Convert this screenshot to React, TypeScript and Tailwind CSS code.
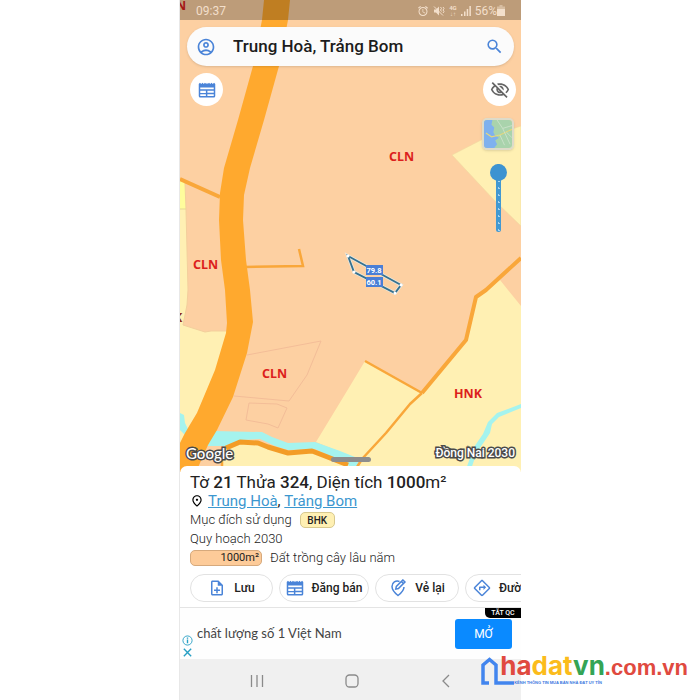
import React from "react";
import { MdAlarm, MdSearch, MdOutlineAccountCircle, MdOutlineVisibilityOff, MdOutlinePlace, MdOutlineNoteAdd, MdOutlineDirections } from "react-icons/md";

const ROBOTO = "font-[Roboto,'Noto_Sans',sans-serif]";

function NewsIcon({ className }: { className?: string }) {
  return (
    <svg viewBox="0 0 24 24" className={className} fill="currentColor" aria-hidden="true">
      <path
        fillRule="evenodd"
        d="M1 4l1.600-1.600L4.300 4 6 2.400 7.700 4l1.600-1.600L11 4l1-1.600L13 4l1.700-1.600L16.300 4 18 2.400 19.700 4l1.700-1.600L23 4v16a2 2 0 0 1-2 2H3a2 2 0 0 1-2-2zM3 8.500v2.500h18V8.500zM3 13v7h7.500v-2.500H3v-1.500h7.500V13zM12.500 13v2.500H21V13zM12.500 17.500V20H21v-2.500z"
      />
    </svg>
  );
}

function RedrawIcon({ className }: { className?: string }) {
  return (
    <svg viewBox="0 0 24 24" className={className} fill="none" stroke="currentColor" strokeWidth="2" aria-hidden="true">
      <path d="M14 3.300C9 1.500 4 4.500 4 10c0 4 3 8 8 12 5-4 8-8 8-11.500" />
      <path d="M9 13.500l.8-3.600L18.500 1.300l2.800 2.800-8.700 8.600z" />
      <path d="M16.500 3.300l2.800 2.800" />
    </svg>
  );
}

function MutedIcon() {
  return (
    <svg viewBox="0 0 24 24" className="size-3" aria-hidden="true">
      <path d="M2 9h4l6-6v18l-6-6H2z" fill="currentColor" />
      <path d="M2 3l18 18M15 4l2 3-2 3 2 3M20 4l2 3-2 3 2 3-2 3" fill="none" stroke="currentColor" strokeWidth="2" />
    </svg>
  );
}

function MapCanvas() {
  return (
    <svg
      viewBox="0 0 341 472"
      preserveAspectRatio="xMidYMid slice"
      className="absolute inset-0 size-full"
      role="img"
      aria-label="Bản đồ quy hoạch"
    >
      <rect width="341" height="472" fill="#fdd0a2" />
      {/* farm land */}
      <g fill="#fff0b3">
        <path d="M0 181L5 183L6 210L8 290L7 305L3 325L25 332L31 331L47 331L36 370L17 413L5 433L0 443Z" />
        <path d="M272 155L305 138L341 126V226L315 201Z" stroke="#f0d9a0" strokeWidth=".6" />
        <path d="M185 361L242 393L286 340L296 297L306 290L320 280L341 306V472H160L172 457L136 442L170 386Z" />
        <path d="M43 472V449L60 442L78 443L108 453L132 451L165 464L180 472Z" />
      </g>
      <path d="M0 181L5 183L6 209H0Z" fill="#fffd9c" />
      {/* water */}
      <g fill="#a5f3ee">
        <path d="M0 413L4 415L5 423L10 433L16 436L8 438L0 430Z" />
        <path d="M34 431L82 432L92 437L108 443L135 442L160 451L180 459L178 472L165 463L135 449L108 450L95 446L80 439L60 440L50 446L27 446Z" />
        <path d="M341 404L317 413L308 422L303 434L294 447L285 472H290L297 452L304 442L310 433L312 424L319 417L341 408Z" />
      </g>
      {/* parcel outlines */}
      <g fill="none" stroke="#f3bd98" strokeWidth="1">
        <path d="M67 355L141 341L127 375L109 401L54 396M69 403L97 404L107 408L98 428L88 424L66 420Z" />
        <path d="M5 183L6 210L8 290L7 305L3 325L25 332L31 331H47" stroke="#f3cf9c" />
        <path d="M0 209H6" stroke="#e5d794" />
      </g>
      {/* roads */}
      <g fill="none" stroke="#f9a73a" strokeLinejoin="round">
        <path d="M0 179L40 197" strokeWidth="4" />
        <path d="M64 267L123 266L119 249" strokeWidth="2.500" strokeLinejoin="miter" />
        <path d="M46 448L60 442L78 443L88 447L108 453L132 451L145 456L168 465" strokeWidth="5" stroke="#f39c27" />
        <path d="M42 448V472" strokeWidth="2.500" />
        <path d="M341 258L306 290L296 297L286 340L242 393" strokeWidth="4" />
        <path d="M185 361L242 393" strokeWidth="2.500" />
        <path d="M242 393L230 404L206 433L182 459L174 472" strokeWidth="2.500" />
      </g>
      <path
        d="M84 0H110L108 20L99 66L84 120L70 168L64 195L63 220L66 260L70 290L73 322L67 353L53 397L37 430L28 445L16 472H0V443L5 433L17 413L35 370L46 333L47 323L45 290L41 260L39 220L40 193L44 168L58 120L73 66L82 20Z"
        fill="#ffa92e"
      />
      {/* land use codes */}
      <g fill="#dc1f1c" fontSize="12.500" fontWeight="700" fontFamily="'Noto Sans', sans-serif">
        <text x="209" y="161">CLN</text>
        <text x="13" y="269">CLN</text>
        <text x="82" y="378">CLN</text>
        <text x="274" y="398">HNK</text>
        <text x="-4" y="10">N</text>
        <text x="-6" y="322" fill="#8e2a1a">K</text>
      </g>
      {/* selected parcel */}
      <path d="M168 256L221 285L215 293L174 272Z" fill="none" stroke="#dff0f5" strokeWidth="3.500" opacity=".7" />
      <path d="M168 256L221 285L215 293L174 272Z" fill="none" stroke="#35718f" strokeWidth="1.800" />
      <g fill="#ffffff">
        <circle cx="168" cy="256" r="1.500" />
        <circle cx="221" cy="285" r="1.500" />
        <circle cx="215" cy="293" r="1.500" />
        <circle cx="174" cy="272" r="1.500" />
      </g>
      <g fill="#4a7fd6">
        <rect x="186" y="265" width="17" height="10" />
        <rect x="186" y="277" width="17" height="10" />
      </g>
      <g fill="#ffffff" fontSize="7.500" fontWeight="700" fontFamily="Roboto, sans-serif" textAnchor="middle">
        <text x="194" y="273">79.8</text>
        <text x="194" y="285">60.1</text>
      </g>
    </svg>
  );
}

function MapStyleThumb() {
  return (
    <svg viewBox="0 0 30 30" className="size-full" aria-hidden="true">
      <rect width="30" height="30" fill="#a9d3ac" />
      <path d="M0 0H9L8 5L11 8L10 13L12 17L16 19L12 22L14 26L11 30H0Z" fill="#7fb1ee" />
      <path d="M2 14L8 18L17 16L30 10" fill="none" stroke="#e6d77c" strokeWidth="1.200" />
      <path d="M17 16L22 27M20 9L28 26M14 0L20 9L30 6M24 13L30 19" fill="none" stroke="#d3e6d2" strokeWidth=".8" />
    </svg>
  );
}

function StatusBar() {
  return (
    <div className="flex h-5 items-center justify-between bg-black/25 pt-px pl-4 pr-4 text-[12px] text-[#f3dfcb]">
      <span>09:37</span>
      <span className="flex items-center gap-1">
        <MdAlarm className="size-3" />
        <MutedIcon />
        <span className="flex flex-col items-center text-[6px] leading-[6px]">
          <b>4G</b>
          <span>↓↑</span>
        </span>
        <svg viewBox="0 0 10 10" className="size-[10px]" fill="currentColor" aria-hidden="true">
          <path d="M0 8h1.500v2H0zM3 5.500h1.500V10H3zM5.700 3h1.500v7H5.700zM8.400 0h1.500v10H8.400z" />
        </svg>
        <span className="flex items-center">
          56%
          <svg viewBox="0 0 8 11" className="h-[11px] w-2" fill="currentColor" aria-hidden="true">
            <path d="M2.500 0h3v1.500H8V11H0V1.500h2.500z" opacity=".5" />
            <path d="M0 4h8v7H0z" />
          </svg>
        </span>
      </span>
    </div>
  );
}

const outlined = "[paint-order:stroke] [-webkit-text-stroke:3px_#4a4a4a] text-white";

function MapSection() {
  return (
    <section className="relative flex flex-1 flex-col overflow-hidden">
      <MapCanvas />
      <div className="relative flex flex-1 flex-col">
        <StatusBar />
        <form className="mx-[7px] mt-[7px] flex h-[39px] items-center rounded-full bg-[#fbfbfb] pr-[10px] pl-[9px] shadow-sm" onSubmit={(e) => e.preventDefault()}>
          <button type="button" aria-label="Tài khoản" className="text-[#4a84d8]">
            <MdOutlineAccountCircle className="size-5" />
          </button>
          <input
            aria-label="Tìm kiếm"
            defaultValue="Trung Hoà, Trảng Bom"
            className="ml-[17px] min-w-0 flex-1 bg-transparent text-[17px] font-medium text-[#1c1c1c] outline-none"
          />
          <button type="submit" aria-label="Tìm" className="text-[#4a84d8]">
            <MdSearch className="size-[19px]" />
          </button>
        </form>
        <div className="mt-[7px] flex items-start justify-between pr-1 pl-[10px]">
          <button aria-label="Tin đăng" className="flex size-[33px] items-center justify-center rounded-full bg-white text-[#4a84d8]">
            <NewsIcon className="size-[18px]" />
          </button>
          <div className="flex flex-col items-center">
            <button aria-label="Ẩn lớp bản đồ" className="flex size-[33px] items-center justify-center rounded-full bg-white text-[#666666]">
              <MdOutlineVisibilityOff className="size-5" />
            </button>
            <button aria-label="Kiểu bản đồ" className="mt-3 mr-[3px] size-8 overflow-hidden rounded-[5px] border-2 border-[#dedbc9] shadow-sm">
              <MapStyleThumb />
            </button>
            <input
              type="range"
              aria-label="Độ trong suốt"
              defaultValue={0}
              className="mt-[14px] mr-[3px] h-[68px] w-[17px] appearance-none bg-transparent [writing-mode:vertical-lr] [&::-webkit-slider-runnable-track]:h-full [&::-webkit-slider-runnable-track]:w-[5px] [&::-webkit-slider-runnable-track]:rounded-full [&::-webkit-slider-runnable-track]:bg-[#4299d2] [&::-webkit-slider-runnable-track]:bg-[radial-gradient(circle,#a6d3ee_1px,transparent_1px)] [&::-webkit-slider-runnable-track]:bg-[length:5px_7px] [&::-webkit-slider-thumb]:-ml-[6px] [&::-webkit-slider-thumb]:size-[17px] [&::-webkit-slider-thumb]:appearance-none [&::-webkit-slider-thumb]:rounded-full [&::-webkit-slider-thumb]:bg-[#3d93d1]"
            />
          </div>
        </div>
        <div className="mt-auto grid grid-cols-[1fr_auto_1fr] items-center px-[6px] pb-[9px]">
          <span className={`font-[Lato,sans-serif] text-[15px] leading-5 font-medium ${outlined}`}>Google</span>
          <span className="mt-3 h-[5px] w-10 rounded-full bg-[#8d8d8d]" />
          <span className={`text-right text-[12px] leading-5 font-medium ${outlined}`}>Đồng Nai 2030</span>
        </div>
      </div>
    </section>
  );
}

const chip = "flex h-7 shrink-0 items-center justify-center rounded-full border border-[#e2e2e2] bg-white text-[12px] font-medium text-[#222222]";

function DetailSheet() {
  return (
    <section className="relative -mt-[6px] overflow-hidden rounded-t-[7px] bg-white pt-[6px] pb-[5px] text-[13px] font-light text-[#222222]">
      <div className="pl-[10px]">
        <h1 className="text-[17px] leading-5 font-normal text-[#222222]">
          Tờ <b className="font-medium">21</b> Thửa <b className="font-medium">324</b>, Diện tích <b className="font-medium">1000</b>m²
        </h1>
        <p className="flex h-[18px] items-center text-[15px] font-normal">
          <MdOutlinePlace className="mr-1 size-[14px] text-black" />
          <a href="#trung-hoa" className="text-[#3c97cf] underline">Trung Hoà</a>,&nbsp;
          <a href="#trang-bom" className="text-[#3c97cf] underline">Trảng Bom</a>
        </p>
        <p className="flex h-5 items-center gap-2">
          Mục đích sử dụng
          <span className="flex h-4 w-[35px] items-center justify-center rounded-[5px] border border-[#d8c98e] bg-[#fff0b3] text-[10px] font-medium">BHK</span>
        </p>
        <p className="leading-[18px]">Quy hoạch 2030</p>
        <p className="flex h-5 items-center gap-2">
          <span className="flex h-4 w-[72px] items-center justify-end rounded-[5px] border border-[#d6a97c] bg-[#fdcb99] pr-[2px] text-[11px] font-normal">1000m²</span>
          Đất trồng cây lâu năm
        </p>
      </div>
      <div className="mt-[6px] flex gap-[6px] overflow-hidden pl-[10px]">
        <button className={`${chip} w-[83px] gap-2`}>
          <MdOutlineNoteAdd className="size-[18px] text-[#4a84d8]" />
          Lưu
        </button>
        <button className={`${chip} w-[90px] gap-2`}>
          <NewsIcon className="size-[18px] text-[#4a84d8]" />
          Đăng bán
        </button>
        <button className={`${chip} w-[84px] gap-2`}>
          <RedrawIcon className="size-[18px] text-[#4a84d8]" />
          Vẻ lại
        </button>
        <button className={`${chip} gap-2 px-[7px]`}>
          <MdOutlineDirections className="size-[18px] text-[#4a84d8]" />
          Đường đi
        </button>
      </div>
    </section>
  );
}

function AdBanner() {
  return (
    <aside className="relative flex h-[52px] items-center border-t border-[#e4e4e4] bg-[#fefefe] pr-[9px] pl-[2px]">
      <div className="flex flex-col gap-px self-end pb-px text-[#279fc4]">
        <svg viewBox="0 0 12 12" className="size-[11px]" fill="none" stroke="currentColor" aria-hidden="true">
          <circle cx="6" cy="6" r="5" />
          <path d="M6 5v4M6 2.800v1.300" strokeWidth="1.500" />
        </svg>
        <button aria-label="Đóng" className="flex">
          <svg viewBox="0 0 12 12" className="size-[11px]" fill="none" stroke="currentColor" strokeWidth="1.500" aria-hidden="true">
            <path d="M2 2l8 8M10 2l-8 8" />
          </svg>
        </button>
      </div>
      <p className="ml-1 flex-1 font-[Lato,'Noto_Sans',sans-serif] text-[13px] text-[#444444]">chất lượng số 1 Việt Nam</p>
      <button className="h-[30px] w-[57px] rounded-[3px] bg-[#0a8aff] text-[12px] text-white">MỞ</button>
      <button className="absolute top-0 right-0 h-[10px] w-9 rounded-bl-[5px] bg-black text-[7px] leading-[10px] font-medium text-white">TẮT QC</button>
    </aside>
  );
}

function NavBar() {
  return (
    <nav className="grid h-[41px] grid-cols-[1fr_40px_1fr] items-center bg-[#f0f0f0] pt-[3px] pl-[2px] text-[#8a8a8a]">
      <button aria-label="Gần đây" className="flex justify-center">
        <svg viewBox="0 0 14 14" className="size-[14px]" stroke="currentColor" strokeWidth="1.300" aria-hidden="true">
          <path d="M1.500 1v12M7 1v12M12.500 1v12" />
        </svg>
      </button>
      <button aria-label="Trang chủ" className="flex justify-center">
        <svg viewBox="0 0 14 14" className="size-[14px]" fill="none" stroke="currentColor" strokeWidth="1.300" aria-hidden="true">
          <rect x="1" y="1" width="12" height="12" rx="3.500" />
        </svg>
      </button>
      <button aria-label="Quay lại" className="flex justify-center">
        <svg viewBox="0 0 14 14" className="size-[14px]" fill="none" stroke="currentColor" strokeWidth="1.300" aria-hidden="true">
          <path d="M10 1L4 7l6 6" />
        </svg>
      </button>
    </nav>
  );
}

function Watermark() {
  return (
    <div className="absolute right-3 bottom-[14px] flex items-end">
      <svg viewBox="0 0 36 30" className="-mr-4 h-[30px] w-9" fill="none" aria-hidden="true">
        <path d="M9 27H3V9L9.500 3.500L16 9V27H34" stroke="#4285ee" strokeWidth="3.500" />
      </svg>
      <div>
        <div className="flex items-baseline font-bold text-[#e04a3f]">
          <span className="font-[Inter,sans-serif] text-[26px] leading-[24px]">
            ha<span className="text-[#fbbc1c]">dat</span><span className="text-[#34a455]">vn</span>
          </span>
          <span className="font-['Liberation_Sans',sans-serif] text-[22px] leading-[24px]">.com.vn</span>
        </div>
        <div className="pl-[14px] font-['Liberation_Sans',sans-serif] text-[4px] leading-[6px] font-bold text-[#3b78e0]">KÊNH THÔNG TIN MUA BÁN NHÀ ĐẤT UY TÍN</div>
      </div>
    </div>
  );
}

export default function App() {
  return (
    <div className={`relative flex min-h-screen justify-center bg-white ${ROBOTO}`}>
      <main className="flex w-full max-w-[342px] flex-col border-l border-[#e8e8e8]">
        <MapSection />
        <DetailSheet />
        <AdBanner />
        <NavBar />
      </main>
      <Watermark />
    </div>
  );
}
